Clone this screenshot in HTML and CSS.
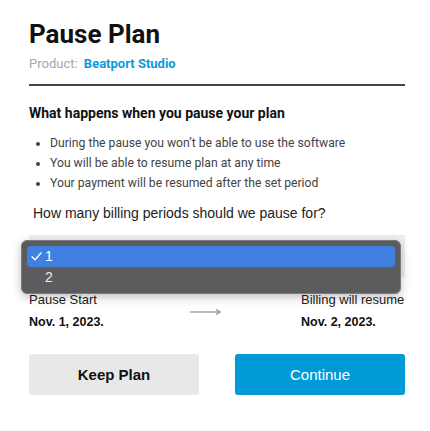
FILE: index.html
```html
<!DOCTYPE html>
<html lang="en">
<head>
    <meta charset="UTF-8">
    <meta name="viewport" content="width=device-width, initial-scale=1.0">
    <title>Pause Plan</title>
    <link rel="stylesheet" href="styles.css">
</head>
<body>
    <div class="container">
        <h1 class="title">Pause Plan</h1>
        <div class="product">
            <span class="product-label">Product:</span>
            <span class="product-name">Beatport Studio</span>
        </div>
        <hr class="divider">

        <h2 class="info-title">What happens when you pause your plan</h2>
        <ul class="info-list">
            <li>During the pause you won’t be able to use the software</li>
            <li>You will be able to resume plan at any time</li>
            <li>Your payment will be resumed after the set period</li>
        </ul>

        <label class="question">How many billing periods should we pause for?</label>
        <div class="select-wrap">
            <div class="select-box"></div>
            <div class="select-menu">
                <div class="option selected">
                    <span class="check">
                        <svg width="11" height="9" viewBox="0 0 11 9">
                            <path d="M1 4.8 L4 7.8 L10 1" fill="none" stroke="#fff" stroke-width="1.3" stroke-linecap="round" stroke-linejoin="round"/>
                        </svg>
                    </span>1
                </div>
                <div class="option"><span class="check"></span>2</div>
            </div>
        </div>

        <div class="dates">
            <div class="date-col">
                <div class="date-label">Pause Start</div>
                <div class="date-value">Nov. 1, 2023.</div>
            </div>
            <div class="arrow">
                <svg width="31" height="6" viewBox="0 0 31 6">
                    <line x1="0" y1="3" x2="29" y2="3" stroke="#8a8a8a" stroke-width="1.2"/>
                    <path d="M26 0.5 L30.5 3 L26 5.5" fill="none" stroke="#8a8a8a" stroke-width="1.1"/>
                </svg>
            </div>
            <div class="date-col right">
                <div class="date-label">Billing will resume</div>
                <div class="date-value">Nov. 2, 2023.</div>
            </div>
        </div>

        <div class="actions">
            <button class="btn btn-keep">Keep Plan</button>
            <button class="btn btn-continue">Continue</button>
        </div>
    </div>
</body>
</html>
```

FILE: styles.css
```css
body {
    margin: 0;
    background-color: #fff;
    font-family: Roboto, "Liberation Sans", sans-serif;
}
.container {
    width: 376px;
    padding: 17px 0 0 29px;
}
.title {
    margin: 0;
    font-size: 26px;
    line-height: 34px;
    font-weight: 700;
    color: #111;
}
.product {
    margin-top: 3px;
    font-size: 13px;
    line-height: 20px;
}
.product-label {
    color: #a8a8a8;
    margin-right: 3px;
}
.product-name {
    color: #0b9ad8;
    font-weight: 700;
}
.divider {
    margin: 10px 0 0;
    border: none;
    height: 2px;
    background-color: #444;
}
.info-title {
    margin: 17px 0 0;
    font-size: 14px;
    line-height: 20px;
    font-weight: 700;
    color: #111;
}
.info-list {
    margin: 10px 0 0;
    padding-left: 21px;
    font-size: 12.2px;
    line-height: 20px;
    color: #444;
}
.question {
    display: block;
    margin-top: 10px;
    padding-left: 4px;
    font-family: "Liberation Sans", Arial, sans-serif;
    font-size: 14px;
    line-height: 20px;
    color: #222;
}
.select-wrap {
    position: relative;
    margin-top: 12px;
}
.select-box {
    height: 42px;
    background-color: #efefef;
}
.select-menu {
    position: absolute;
    top: 5px;
    left: -8px;
    width: 368px;
    padding: 5px;
    background-color: #5c5c5e;
    border: 1px solid #7a7a7c;
    border-radius: 6px;
    box-shadow: 0 3px 10px rgba(0, 0, 0, 0.25);
    font-family: "Liberation Sans", Arial, sans-serif;
    font-size: 14px;
    color: #ececec;
}
.option {
    height: 21px;
    line-height: 21px;
    border-radius: 4px;
    display: flex;
    align-items: center;
}
.option.selected {
    background-color: #3f80e0;
    color: #fff;
}
.check {
    display: flex;
    align-items: center;
    width: 14px;
    padding-left: 4px;
}
.dates {
    display: flex;
    align-items: center;
    justify-content: space-between;
    margin-top: 14px;
    font-family: "Liberation Sans", Arial, sans-serif;
}
.date-label {
    font-size: 13px;
    line-height: 18px;
    color: #222;
}
.date-value {
    margin-top: 4px;
    font-size: 12.5px;
    line-height: 18px;
    font-weight: 700;
    color: #111;
}
.date-col.right {
    width: 104px;
}
.arrow {
    margin-left: 6px;
    margin-top: -2px;
}
.actions {
    display: flex;
    justify-content: space-between;
    margin-top: 23px;
}
.btn {
    width: 170px;
    height: 41px;
    border: none;
    border-radius: 3px;
    font-family: "Liberation Sans", Arial, sans-serif;
    font-size: 15px;
    cursor: pointer;
}
.btn-keep {
    background-color: #e8e8e8;
    color: #111;
    font-weight: 700;
}
.btn-continue {
    background-color: #009bd7;
    color: #fff;
}
```
